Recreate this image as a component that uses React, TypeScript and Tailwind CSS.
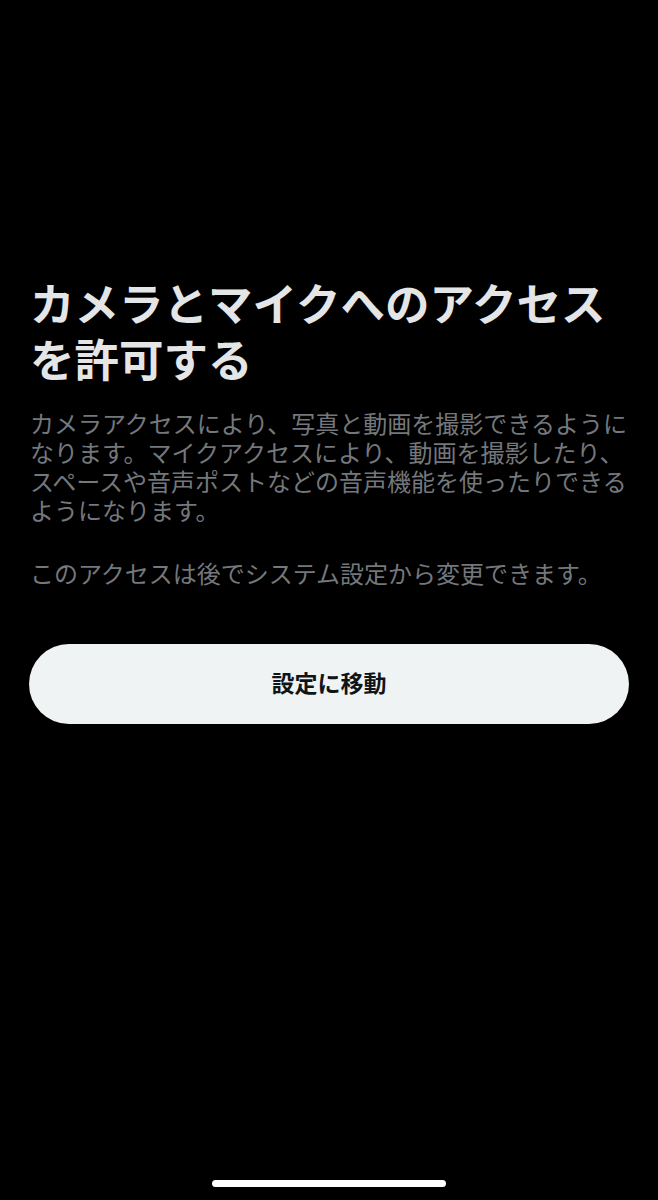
import React from "react";

export default function App() {
  return (
    <div
      className="w-[658px] h-[1200px] bg-black flex flex-col relative overflow-hidden"
      style={{ fontFamily: '"Noto Sans CJK JP", "Noto Sans", sans-serif' }}
    >
      <div className="px-[30px] pt-[274px] flex flex-col">
        <h1 className="text-[44.5px] leading-[56px] font-bold text-[#e3e5e6] whitespace-nowrap">
          カメラとマイクへのアクセス
          <br />
          を許可する
        </h1>
        <p className="mt-[22px] text-[24px] leading-[29px] text-[#74787c] whitespace-nowrap">
          カメラアクセスにより、写真と動画を撮影できるように
          <br />
          なります。マイクアクセスにより、動画を撮影したり、
          <br />
          スペースや音声ポストなどの音声機能を使ったりできる
          <br />
          ようになります。
        </p>
        <p className="mt-[34px] text-[24px] leading-[29px] text-[#74787c] whitespace-nowrap">
          このアクセスは後でシステム設定から変更できます。
        </p>
      </div>
      <div className="px-[29px] mt-[57px]">
        <button className="w-full h-[80px] rounded-full bg-[#eff3f4] text-[#0f1419] text-[23px] font-bold flex items-center justify-center pb-[3px]">
          設定に移動
        </button>
      </div>
      <div className="absolute bottom-[13px] left-0 right-0 flex justify-center">
        <div className="w-[234px] h-[7px] rounded-full bg-white" />
      </div>
    </div>
  );
}
